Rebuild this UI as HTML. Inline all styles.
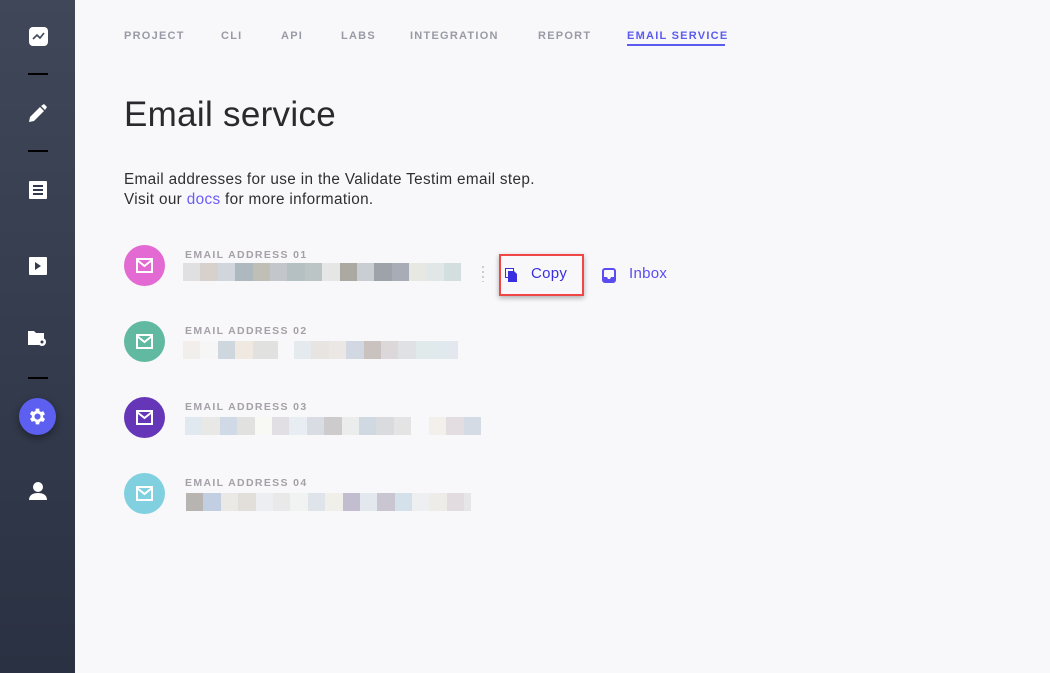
<!DOCTYPE html>
<html><head><meta charset="utf-8"><style>
*{margin:0;padding:0;box-sizing:border-box}
body{width:1050px;height:673px;background:#f8f8fa;font-family:"Liberation Sans",sans-serif;position:relative;overflow:hidden}
.side{position:absolute;left:0;top:0;width:75px;height:673px;background:linear-gradient(#3f4759,#2a3142)}
.ab{position:absolute}
.sep{position:absolute;left:28px;width:20px;height:2px;background:#000}
.tab{position:absolute;top:30px;font-size:11px;letter-spacing:1.25px;font-weight:bold;color:#9a9aa6}
.lbl{position:absolute;left:185px;font-size:10.5px;letter-spacing:1.35px;font-weight:bold;color:#a5a0a8}
.circ{position:absolute;left:124px;width:41px;height:41px;border-radius:50%}
.circ svg{position:absolute;left:12px;top:13px}
.blk{position:absolute;height:18px;display:flex}
.blk i{display:block;width:17.4px;height:18px;flex-shrink:0}
</style></head><body>
<div class="side">
<svg class="ab" style="left:29px;top:27px" width="19" height="19" viewBox="0 0 19 19"><rect width="19" height="19" rx="4" fill="#fff"/><path d="M4 12l4-4 3 3 4-5" stroke="#3f4759" stroke-width="1.6" fill="none"/></svg>
<div class="sep" style="top:73px"></div>
<svg class="ab" style="left:28px;top:103px" width="20" height="20" viewBox="0 0 20 20"><path d="M1 19l1-5 10-10 4 4-10 10z" fill="#fff"/><path d="M13 3l3-2 3 3-2 3z" fill="#fff"/></svg>
<div class="sep" style="top:150px"></div>
<svg class="ab" style="left:29px;top:181px" width="18" height="18" viewBox="0 0 18 18"><rect width="18" height="18" rx="1" fill="#fff"/><rect x="4" y="4" width="10" height="2" fill="#333a4b"/><rect x="4" y="8" width="10" height="2" fill="#333a4b"/><rect x="4" y="12" width="10" height="2" fill="#333a4b"/></svg>
<svg class="ab" style="left:29px;top:257px" width="18" height="18" viewBox="0 0 18 18"><rect width="18" height="18" rx="1" fill="#fff"/><path d="M6 5l6 4-6 4z" fill="#333a4b"/></svg>
<svg class="ab" style="left:27px;top:329px" width="21" height="19" viewBox="0 0 21 19"><path d="M1 2h6l2 2h8v6a5 5 0 0 0-5 6H1z" fill="#fff"/><circle cx="15" cy="13" r="4" fill="#fff"/><circle cx="15" cy="13" r="1.5" fill="#333a4b"/></svg>
<div class="sep" style="top:377px"></div>
<div class="ab" style="left:19px;top:398px;width:37px;height:37px;border-radius:50%;background:#5d5ff0;box-shadow:0 3px 8px rgba(0,0,0,.4)"></div>
<svg class="ab" style="left:27px;top:406px" width="21" height="21" viewBox="0 0 24 24"><path fill="#fff" d="M19.4 13a7.5 7.5 0 0 0 0-2l2.1-1.6-2-3.5-2.5 1a7 7 0 0 0-1.7-1L15 3h-4l-.4 2.7a7 7 0 0 0-1.7 1l-2.5-1-2 3.5L6.6 11a7.5 7.5 0 0 0 0 2l-2.1 1.6 2 3.5 2.5-1a7 7 0 0 0 1.700 1L11 21h4l.4-2.7a7 7 0 0 0 1.7-1l2.5 1 2-3.5zM13 15.5a3.5 3.5 0 1 1 0-7 3.5 3.5 0 0 1 0 7z" transform="translate(-1 0)"/></svg>
<svg class="ab" style="left:28px;top:481px" width="20" height="20" viewBox="0 0 20 20"><circle cx="10" cy="6" r="5" fill="#fff"/><path d="M1 19c0-5 4-7 9-7s9 2 9 7z" fill="#fff"/></svg>
</div>

<div class="tab" style="left:124px">PROJECT</div>
<div class="tab" style="left:221px">CLI</div>
<div class="tab" style="left:281px">API</div>
<div class="tab" style="left:341px">LABS</div>
<div class="tab" style="left:410px">INTEGRATION</div>
<div class="tab" style="left:538px">REPORT</div>
<div class="tab" style="left:627px;color:#5b5bf0">EMAIL SERVICE</div>
<div class="ab" style="left:627px;top:44px;width:98px;height:2px;background:#5b5bf0"></div>

<div class="ab" style="left:124px;top:95px;font-size:35px;color:#2a2a2e;letter-spacing:.3px">Email service</div>
<div class="ab" style="left:124px;top:170px;font-size:15.3px;line-height:20px;color:#2f2f33;letter-spacing:.35px">Email addresses for use in the Validate Testim email step.<br>Visit our <span style="color:#6a5cf5">docs</span> for more information.</div>

<div class="circ" style="top:245px;background:#e26ad2"><svg width="17" height="15" viewBox="0 0 17 15"><rect x="1" y="1" width="15" height="13" fill="none" stroke="#fff" stroke-width="2"/><path d="M1 2l7.5 6L16 2" stroke="#fff" stroke-width="2" fill="none"/></svg></div>
<div class="circ" style="top:321px;background:#62b9a2"><svg width="17" height="15" viewBox="0 0 17 15"><rect x="1" y="1" width="15" height="13" fill="none" stroke="#fff" stroke-width="2"/><path d="M1 2l7.5 6L16 2" stroke="#fff" stroke-width="2" fill="none"/></svg></div>
<div class="circ" style="top:397px;background:#6537b8"><svg width="17" height="15" viewBox="0 0 17 15"><rect x="1" y="1" width="15" height="13" fill="none" stroke="#fff" stroke-width="2"/><path d="M1 2l7.5 6L16 2" stroke="#fff" stroke-width="2" fill="none"/></svg></div>
<div class="circ" style="top:473px;background:#80d0e0"><svg width="17" height="15" viewBox="0 0 17 15"><rect x="1" y="1" width="15" height="13" fill="none" stroke="#fff" stroke-width="2"/><path d="M1 2l7.5 6L16 2" stroke="#fff" stroke-width="2" fill="none"/></svg></div>

<div class="lbl" style="top:249px">EMAIL ADDRESS 01</div>
<div class="lbl" style="top:325px">EMAIL ADDRESS 02</div>
<div class="lbl" style="top:401px">EMAIL ADDRESS 03</div>
<div class="lbl" style="top:477px">EMAIL ADDRESS 04</div>

<div class="blk" style="left:183px;top:263px"><i style="background:#e0dfe1"></i><i style="background:#d8d0cc"></i><i style="background:#d0d6dc"></i><i style="background:#aeb8bf"></i><i style="background:#bfbfb6"></i><i style="background:#c3c6ca"></i><i style="background:#b5c0c2"></i><i style="background:#bcc5c5"></i><i style="background:#e6e6e6"></i><i style="background:#aca9a3"></i><i style="background:#c9ced3"></i><i style="background:#9ea2a9"></i><i style="background:#a8acb6"></i><i style="background:#e7e8e2"></i><i style="background:#e1e6e6"></i><i style="background:#d2dfde"></i></div>
<div class="ab" style="left:482px;top:266px;width:2px;height:16px;background:repeating-linear-gradient(#ccc 0 2px,transparent 2px 5px)"></div>

<div class="blk" style="left:183px;top:341px"><i style="background:#f1eeec"></i><i style="background:#f6f6f6"></i><i style="background:#ced6de"></i><i style="background:#f0e9e2"></i><i style="background:#e1e2e0"></i><i style="background:#e1e2e0;width:8px"></i><i style="background:transparent;width:16px"></i><i style="background:#e5eaee"></i><i style="background:#e8e4e1"></i><i style="background:#eae7e5"></i><i style="background:#d2d8e1"></i><i style="background:#c9c2be"></i><i style="background:#dcd8da"></i><i style="background:#e0e1e4"></i><i style="background:#e1eaea"></i><i style="background:#e0e9ee"></i><i style="background:#e5e7ef;width:8px"></i></div>

<div class="blk" style="left:185px;top:417px"><i style="background:#e0e8f0"></i><i style="background:#e8e8e6"></i><i style="background:#d0dae6"></i><i style="background:#e1e1df"></i><i style="background:#f8f8f5"></i><i style="background:#e1dfe3"></i><i style="background:#e8ecf3"></i><i style="background:#d9dce2"></i><i style="background:#cdcbcb"></i><i style="background:#ebedec"></i><i style="background:#d0d9e2"></i><i style="background:#dadbdf"></i><i style="background:#e4e4e4"></i><i style="background:transparent;width:18px"></i><i style="background:#f3efea"></i><i style="background:#e3dde1"></i><i style="background:#d4dbe5"></i></div>

<div class="blk" style="left:186px;top:493px"><i style="background:#b8b4b2"></i><i style="background:#c2cfe3"></i><i style="background:#ebe9e6"></i><i style="background:#e2dfdb"></i><i style="background:#eceef1"></i><i style="background:#e8e9e8"></i><i style="background:#f1f3f2"></i><i style="background:#dfe3ea"></i><i style="background:#f1efea"></i><i style="background:#c2bed0"></i><i style="background:#e2e8ed"></i><i style="background:#c9c6d1"></i><i style="background:#d4e0ea"></i><i style="background:#eeeff0"></i><i style="background:#eeece9"></i><i style="background:#e2dbdf"></i><i style="background:#e6e6e9;width:7px"></i></div>

<div class="ab" style="left:499px;top:254px;width:85px;height:42px;border:2px solid #f04646;box-shadow:0 2px 5px rgba(0,0,0,.3)"></div>
<svg class="ab" style="left:505px;top:268px" width="13" height="14" viewBox="0 0 13 14"><rect x="0.5" y="0.5" width="8" height="9" fill="none" stroke="#3a2fe0" stroke-width="1"/><path d="M3 3h6l3 3v8H3z" fill="#3a2fe0"/></svg>
<div class="ab" style="left:531px;top:265px;font-size:15px;color:#3a2fe0;letter-spacing:.3px">Copy</div>
<svg class="ab" style="left:602px;top:268px" width="14" height="15" viewBox="0 0 14 15"><rect x="1" y="1" width="12" height="13" rx="2" fill="none" stroke="#5b4cf0" stroke-width="2"/><path d="M1 9h4l1 2h2l1-2h4v5H1z" fill="#5b4cf0"/></svg>
<div class="ab" style="left:629px;top:265px;font-size:15px;color:#5b4cf0;letter-spacing:.3px">Inbox</div>
</body></html>
